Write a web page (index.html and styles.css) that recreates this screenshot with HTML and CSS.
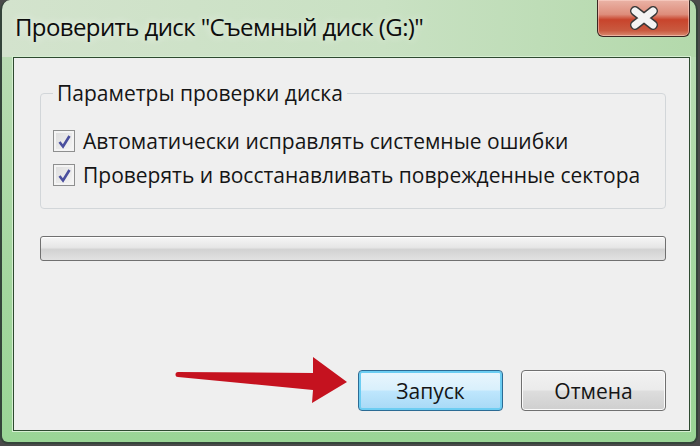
FILE: index.html
```html
<!DOCTYPE html>
<html lang="ru">
<head>
    <meta charset="UTF-8">
    <meta name="viewport" content="width=device-width, initial-scale=1.0">
    <title>Проверить диск</title>
    <link rel="stylesheet" href="styles.css">
</head>
<body>
    <div class="window">
        <div class="titlebar">
            <span class="title">Проверить диск "Съемный диск (G:)"</span>
            <button class="close" aria-label="Закрыть">
                <svg width="30" height="24" viewBox="-15 -12 30 24">
                    <path d="M-9,-7 L9,7 M9,-7 L-9,7" stroke="#3a3a3a" stroke-width="10" stroke-linecap="round"/>
                    <path d="M-9,-7 L9,7 M9,-7 L-9,7" stroke="#f4f4f4" stroke-width="7" stroke-linecap="round"/>
                </svg>
            </button>
        </div>
        <div class="frame">
            <div class="client">
                <fieldset class="group">
                    <legend>Параметры проверки диска</legend>
                    <label class="check">
                        <span class="box">
                            <svg width="15" height="15" viewBox="0 0 15 15"><path d="M2.5 8 L6 12.5 L12.5 2" fill="none" stroke="#4a4f9e" stroke-width="2.6"/></svg>
                        </span>
                        Автоматически исправлять системные ошибки
                    </label>
                    <label class="check">
                        <span class="box">
                            <svg width="15" height="15" viewBox="0 0 15 15"><path d="M2.5 8 L6 12.5 L12.5 2" fill="none" stroke="#4a4f9e" stroke-width="2.6"/></svg>
                        </span>
                        Проверять и восстанавливать поврежденные сектора
                    </label>
                </fieldset>
                <div class="progress"></div>
                <div class="actions">
                    <button class="btn btn-default">Запуск</button>
                    <button class="btn">Отмена</button>
                </div>
            </div>
        </div>
    </div>

    <!-- red pointer drawn over the dialog -->
    <svg class="arrow" width="700" height="446" viewBox="0 0 700 446">
        <path d="M178,372 L313,373 L313,357 L347,382 L312,403 L313,390 L178,377 A2.5,2.5 0 0 1 178,372 Z" fill="#c5121f"/>
    </svg>
</body>
</html>
```

FILE: styles.css
```css
* {
    margin: 0;
    padding: 0;
    box-sizing: border-box;
}

body {
    position: relative;
    width: 700px;
    height: 446px;
    background: #4a4a4a;
    font-family: 'Open Sans', 'Noto Sans', sans-serif;
    color: #151515;
    overflow: hidden;
}

.window {
    width: 698px;
    height: 444px;
    display: flex;
    flex-direction: column;
    border: 2px solid #34443a;
    border-top: none;
    border-radius: 10px 10px 8px 8px;
    overflow: hidden;
}

.titlebar {
    height: 57px;
    display: flex;
    align-items: flex-start;
    padding-left: 13px;
    background: linear-gradient(90deg, #d3e3cd 0%, #c9e1c3 55%, #b3d9ab 100%);
}

.title {
    margin-top: 9px;
    font-size: 24px;
    line-height: 36px;
    letter-spacing: -0.6px;
    color: #0d0d0d;
    text-shadow: 0 0 8px rgba(255, 255, 255, 0.8);
}

.close {
    margin-left: auto;
    margin-right: 6px;
    width: 93px;
    height: 37px;
    border: 1px solid #3a2622;
    border-top: none;
    border-radius: 0 0 6px 6px;
    background: linear-gradient(180deg, #eab3a6 0%, #de8d7b 40%, #c8442c 55%, #c95a40 85%, #d98a70 100%);
    box-shadow: inset 0 0 0 1px rgba(255, 220, 210, 0.5);
    display: flex;
    justify-content: center;
    align-items: center;
}

.frame {
    flex: 1;
    display: flex;
    padding: 0 6px 11px 11px;
    background: linear-gradient(180deg, #b9dcb3 0%, #a3d69e 60%, #9ad596 100%);
}

.client {
    flex: 1;
    display: flex;
    flex-direction: column;
    border: 1px solid #2e4a30;
    box-shadow: 0 0 0 1px #d6efd2;
    background: #efefef;
    padding: 0 23px 19px 26px;
}

.group {
    margin-top: 21px;
    border: 1px solid #d2d6d9;
    border-radius: 4px;
    padding: 23px 12px 22px 12px;
    display: flex;
    flex-direction: column;
    gap: 12px;
}

.group legend {
    padding: 0 4px;
    font-size: 21px;
}

.check {
    display: flex;
    align-items: center;
    gap: 8px;
    font-size: 21px;
    line-height: 22px;
}

.box {
    width: 22px;
    height: 22px;
    border: 1px solid #8e8f8f;
    background: linear-gradient(135deg, #dcdcdc, #f6f6f6);
    box-shadow: inset 0 0 0 2px #f4f4f4;
    display: flex;
    justify-content: center;
    align-items: center;
}

.progress {
    margin-top: 27px;
    height: 25px;
    border: 1px solid #707070;
    border-radius: 3px;
    background: linear-gradient(180deg, #f6f6f6 0%, #e6e6e6 45%, #d2d2d2 55%, #e2e2e2 100%);
    box-shadow: inset 0 1px 0 #ffffff;
}

.actions {
    margin-top: auto;
    display: flex;
    justify-content: flex-end;
    gap: 18px;
}

.btn {
    width: 145px;
    height: 41px;
    border: 1px solid #707070;
    border-radius: 4px;
    background: linear-gradient(180deg, #f2f2f2 0%, #ebebeb 48%, #dddddd 52%, #cfcfcf 100%);
    box-shadow: inset 0 0 0 1px #fbfbfb;
    font-family: inherit;
    font-size: 21px;
    color: #151515;
}

.btn-default {
    border-color: #2c6b94;
    background: linear-gradient(180deg, #eaf6fd 0%, #d9f0fc 48%, #bee6fd 52%, #a7d9f5 100%);
    box-shadow: inset 0 0 0 2px #6ccdf2;
}

.arrow {
    position: absolute;
    left: 0;
    top: 0;
    pointer-events: none;
}
```
